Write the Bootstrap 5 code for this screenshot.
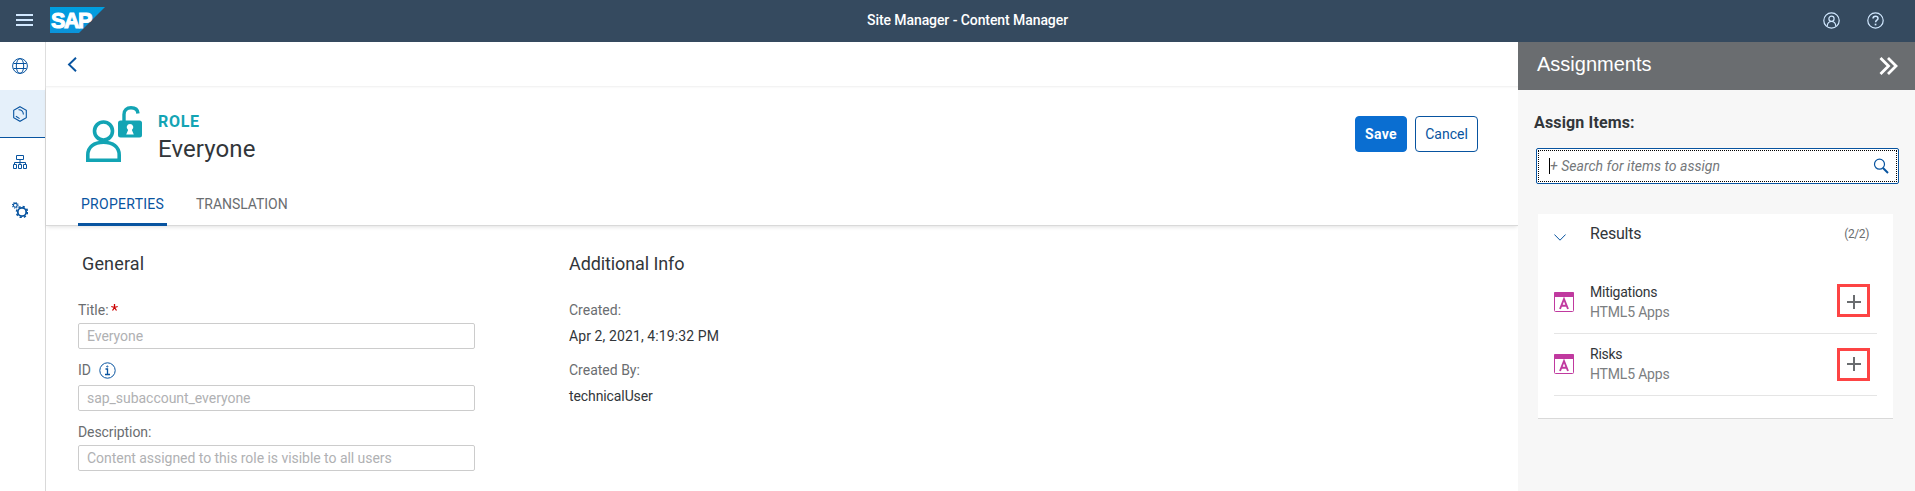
<!DOCTYPE html>
<html lang="en">
<head>
<meta charset="utf-8">
<meta name="viewport" content="width=device-width, initial-scale=1">
<title>Site Manager - Content Manager</title>
<link rel="stylesheet" href="https://cdn.jsdelivr.net/npm/bootstrap@5.3.0/dist/css/bootstrap.min.css">
<style>
body{font-family:Roboto,sans-serif;font-size:14px;line-height:20px;color:#32363a;height:491px;overflow:hidden;background:#fff}
svg{display:block;flex:none}
a{text-decoration:none}
.shell{height:42px;background:#354a5f;color:#fff;padding:0 31px 2px 16px}
.shell>div{flex:1 1 0}
.shell .shell-title{font-weight:500;letter-spacing:-.08px;flex:none;padding-left:35px}
.burger{color:#d1e8ff;margin-right:17px}
.logo-text{font:bold 22px "Liberation Sans",Arial,sans-serif;letter-spacing:-1.5px}
.shell-actions{gap:27px;color:#d1e8ff}
.side{width:46px;border-right:1px solid #d9d9d9;color:#0854a0;flex:none}
.side a{height:48px;width:45px;color:inherit;padding-left:12px}
.side a.active{background:#e5f0fa;border-bottom:1px solid #0854a0}
.work{height:449px}
.crumb{height:45px;padding-left:21px;border-bottom:1px solid #f4f4f4;box-shadow:0 1px 1px #fafafa;color:#0854a0}
.objhead{height:139px;border-bottom:1px solid #d9d9d9;box-shadow:0 2px 4px -1px rgba(0,0,0,.12)}
.objtop{height:92px;padding:19px 40px 0}
.names{padding:6px 0 0 16px}
.kind{color:#13a4b4;font-weight:700;font-size:16px;line-height:20px;letter-spacing:.7px}
.objname{font-size:24px;line-height:34px;letter-spacing:.1px}
.ui-btns{gap:8px;padding-top:10px}
.ui-btn{height:36px;border-radius:4px;font-size:14px;line-height:34px;padding:0;border:1px solid #0854a0;color:#0854a0}
.ui-btn.save{background:#0a6ed1;border-color:#0a6ed1;color:#fff;font-weight:700;width:52px;letter-spacing:.3px}
.ui-btn.cancel{width:63px}
.ui-tabs{height:47px;padding-left:32px;gap:29px}
.ui-tabs a{color:#6a6d70;padding:15px 0 0;letter-spacing:-.05px}
.ui-tabs a.active{color:#0854a0;width:89px;padding-left:3px;letter-spacing:.28px;border-bottom:3px solid #0854a0}
.details{padding:27px 32px 0}
.col-a{width:397px;margin-right:94px}
.sec{font-size:18px;line-height:22px;margin-bottom:25px;letter-spacing:-.1px}
.general{padding-left:4px;letter-spacing:.15px}
.lab{color:#6a6d70;height:20px}
.lab-title{margin-bottom:3px}
.lab-id{margin:11px 0 5px}
.lab-desc{margin:11px 0 3px;letter-spacing:-.08px}
.req{margin:4px 0 0 2px}
.val{margin:6px 0 14px;letter-spacing:.1px}
.val-user{margin-top:6px;letter-spacing:-.1px}
.field{height:26px;border:1px solid #ccc;border-radius:2px;padding:0 8px;font-size:14px;line-height:24px;background:#fff;min-height:0;letter-spacing:-.04px}
.field::placeholder{color:#b0b1b3;opacity:1}
.panel{width:397px;background:#f7f7f7;flex:none}
.panel-head{height:48px;background:#6a6d70;color:#fff;padding:0 17px 4px 19px;font:20px "Liberation Sans",Arial,sans-serif}
.assign{font-weight:700;font-size:16px;margin:23px 0 0 16px;letter-spacing:.15px}
.search{margin:15px 16px 0 18px;height:36px;border:1px solid #0854a0;border-radius:2px;background:#fff;padding:1px}
.search>div{height:32px;border:1px dotted #000;padding:0 7px 0 10px}
.caret{width:1px;height:16px;background:#000}
.hint{font-style:italic;color:#74777a;letter-spacing:.02px}
.result-card{margin:30px 0 0 20px;height:205px;background:#fff;border-bottom:1px solid #d9d9d9;padding:10px 16px 0;width:355px}
.res-head{height:48px}
.chev{margin-top:10px}
.res-name{font-size:16px;letter-spacing:-.2px;padding-left:24px}
.res-count{font-size:12px;color:#6a6d70;letter-spacing:-.4px;padding-right:8px}
.item-row{height:62px;border-bottom:1px solid #e5e5e5;padding-right:13px}
.ic{margin-top:20px}
.txt{padding:10px 0 0 16px;letter-spacing:-.25px}
.sub{color:#7b7e81;letter-spacing:-.18px}
.add{width:20px;margin-top:20px}
.ring{left:-7px;top:-8px;width:33px;height:33px;border:3px solid #fd4444}
.ring.low{top:-6px}
</style>
</head>
<body>
<header class="shell d-flex align-items-center">
 <div class="d-flex align-items-center">
  <svg class="burger" width="17" height="14" viewBox="0 0 17 14" stroke="currentColor" stroke-width="2"><path d="M0 2h17M0 7h17M0 12h17"/></svg>
  <svg width="55" height="26" viewBox="0 0 55 26"><defs><linearGradient id="sapBlue" x2="0" y2="1"><stop stop-color="#009fe0"/><stop offset="1" stop-color="#0b93da"/></linearGradient></defs><path d="M0 0h55L29 26H0z" fill="url(#sapBlue)"/><text class="logo-text" x="1" y="20.500" fill="#fff" stroke="#fff" stroke-width="1" textLength="40" lengthAdjust="spacingAndGlyphs">SAP</text></svg>
 </div>
 <div class="shell-title">Site Manager - Content Manager</div>
 <div class="shell-actions d-flex justify-content-end">
  <svg width="17" height="17" viewBox="0 0 17 17" fill="none" stroke="currentColor" stroke-width="1.200"><circle cx="8.500" cy="8.500" r="7.700"/><circle cx="8.500" cy="6.700" r="2.600"/><path d="M4.200 14c.3-3 1.900-4.500 4.300-4.500s4 1.500 4.300 4.500"/></svg>
  <svg width="17" height="17" viewBox="0 0 17 17" fill="none" stroke="currentColor" stroke-width="1.200"><circle cx="8.500" cy="8.500" r="7.700"/><path d="M6 6.600C6 5 7 4.200 8.500 4.200S11 5 11 6.400c0 1.800-2.400 1.800-2.400 3.900" stroke-width="1.500"/><path d="M7.700 12.500h1.700" stroke-width="1.700"/></svg>
 </div>
</header>
<div class="work d-flex">
 <nav class="side d-flex flex-column">
  <a href="#" class="d-flex align-items-center"><svg width="16" height="16" viewBox="0 0 16 16" fill="none" stroke="currentColor"><circle cx="8" cy="8" r="7.400"/><ellipse cx="8" cy="8" rx="3.700" ry="7.400"/><path d="M1.500 5.500h13M1.500 10.500h13"/></svg></a>
  <a href="#" class="active d-flex align-items-center"><svg width="16" height="16" viewBox="0 0 16 16" fill="none" stroke="currentColor" stroke-width="1.100"><path d="M8 .7l6.300 3.500v7.600L8 15.300 1.700 11.800V4.200z"/><path d="M6.500 3.800c2.800-.2 4.800 1.700 4.900 4.700"/><path d="M3.900 10.200l3.700 2.400"/></svg></a>
  <a href="#" class="d-flex align-items-center"><svg width="16" height="16" viewBox="0 0 16 16" fill="none" stroke="currentColor"><path d="M4.500 1.500h7v4h-7zM8 5.500v5M2.500 10.500v-2h11v2M1.500 10.500h3v4h-3zM6.500 10.500h3v4h-3zM11.500 10.500h3v4h-3z"/></svg></a>
  <a href="#" class="d-flex align-items-center"><svg width="16" height="16" viewBox="0 0 16 16" fill="none" stroke="currentColor"><circle cx="10" cy="10" r="4.200" stroke-width="1.800"/><circle cx="10" cy="10" r="5.500" stroke-width="1.600" stroke-dasharray="2.160"/><circle cx="3.300" cy="3.300" r="1.900" stroke-width="1.100"/><circle cx="3.300" cy="3.300" r="2.800" stroke-width="1.100" stroke-dasharray="1.100"/></svg></a>
 </nav>
 <main class="flex-fill">
  <div class="crumb d-flex align-items-center"><svg width="11" height="15" viewBox="0 0 11 15" fill="none" stroke="currentColor" stroke-width="1.900"><path d="M9 .8L2 7.500l7 6.700"/></svg></div>
  <section class="objhead">
   <div class="objtop d-flex">
    <svg width="56" height="57" viewBox="0 0 56 57" fill="none" stroke="#13a4b4"><circle cx="17.500" cy="25" r="9" stroke-width="3.600"/><path d="M1.800 54.200V49C1.800 41 8 36.300 17.500 36.300S33.200 41 33.200 49v5.200z" stroke-width="3.600"/><path d="M38 15V8.500C38 4 40.800 1.800 45 1.800c4 0 6.700 2 7 5.700" stroke-width="3.400"/><rect x="32" y="14.500" width="24" height="17" rx="2.500" fill="#13a4b4" stroke="none"/><path d="M44 18a3.300 3.300 0 0 1 1.900 6l1.900 4.500h-7.600l1.900-4.500A3.300 3.300 0 0 1 44 18z" fill="#fff" stroke="none"/></svg>
    <div class="names flex-fill"><div class="kind">ROLE</div><div class="objname">Everyone</div></div>
    <div class="ui-btns d-flex"><button class="btn ui-btn save">Save</button><button class="btn ui-btn cancel">Cancel</button></div>
   </div>
   <div class="ui-tabs d-flex"><a href="#" class="active">PROPERTIES</a><a href="#">TRANSLATION</a></div>
  </section>
  <section class="details d-flex">
   <div class="col-a">
    <div class="sec general">General</div>
    <div class="lab lab-title d-flex"><span>Title:</span><svg class="req" width="7" height="7" viewBox="0 0 7 7" stroke="#c00" stroke-width="1.300"><path d="M3.500 3.500V0M3.500 3.500L.3 2.500M3.500 3.500L6.700 2.500M3.500 3.500L1.500 6.500M3.500 3.500L5.500 6.500"/></svg></div>
    <input class="form-control field" placeholder="Everyone">
    <div class="lab lab-id d-flex align-items-center">ID<svg class="ms-2" width="17" height="17" viewBox="0 0 17 17" fill="none" stroke="#0854a0"><circle cx="8.500" cy="8.500" r="7.700"/><path d="M6.500 7h2v5M6 12.500h5" stroke-width="1.300"/><circle cx="8.300" cy="4.500" r=".6"/></svg></div>
    <input class="form-control field" placeholder="sap_subaccount_everyone">
    <div class="lab lab-desc">Description:</div>
    <input class="form-control field" placeholder="Content assigned to this role is visible to all users">
   </div>
   <div>
    <div class="sec">Additional Info</div>
    <div class="lab">Created:</div>
    <div class="val">Apr 2, 2021, 4:19:32 PM</div>
    <div class="lab">Created By:</div>
    <div class="val-user">technicalUser</div>
   </div>
  </section>
 </main>
 <aside class="panel">
  <div class="panel-head d-flex align-items-center justify-content-between"><span>Assignments</span><svg class="mt-1" width="19" height="18" viewBox="0 0 19 18" fill="none" stroke="#fff" stroke-width="2.800"><path d="M1.500 1l8 8-8 8M9 1l8 8-8 8"/></svg></div>
  <div class="assign">Assign Items:</div>
  <div class="search"><div class="d-flex align-items-center"><span class="caret"></span><span class="hint flex-fill">+ Search for items to assign</span><svg width="16" height="16" viewBox="0 0 16 16" fill="none" stroke="#0854a0"><circle cx="6.500" cy="6.200" r="5" stroke-width="1.200"/><path d="M10 10l5 5" stroke-width="2"/></svg></div></div>
  <div class="result-card">
   <div class="res-head d-flex">
    <svg class="chev" width="12" height="7" viewBox="0 0 12 7" fill="none" stroke="#0854a0"><path d="M.4.500L6 6.200 11.600.5"/></svg>
    <span class="res-name flex-fill">Results</span><span class="res-count">(2/2)</span>
   </div>
   <div class="item-row d-flex">
    <svg class="ic" width="20" height="20" viewBox="0 0 20 20"><rect x=".5" y=".5" width="19" height="19" rx="1" fill="#fff" stroke="#c0399f"/><path d="M0 1q0-1 1-1h18q1 0 1 1v4H0z" fill="#c0399f"/><path d="M6 17l4-10 4 10M7.300 13.800h5.400" fill="none" stroke="#c0399f" stroke-width="1.900"/></svg>
    <div class="txt flex-fill"><div>Mitigations</div><div class="sub">HTML5 Apps</div></div>
    <div class="add position-relative"><svg width="20" height="20" viewBox="0 0 20 20" stroke="#6a6d70" stroke-width="2"><path d="M3 10h14M10 3v14"/></svg><span class="ring position-absolute"></span></div>
   </div>
   <div class="item-row d-flex">
    <svg class="ic" width="20" height="20" viewBox="0 0 20 20"><rect x=".5" y=".5" width="19" height="19" rx="1" fill="#fff" stroke="#c0399f"/><path d="M0 1q0-1 1-1h18q1 0 1 1v4H0z" fill="#c0399f"/><path d="M6 17l4-10 4 10M7.300 13.800h5.400" fill="none" stroke="#c0399f" stroke-width="1.900"/></svg>
    <div class="txt flex-fill"><div>Risks</div><div class="sub">HTML5 Apps</div></div>
    <div class="add position-relative"><svg width="20" height="20" viewBox="0 0 20 20" stroke="#6a6d70" stroke-width="2"><path d="M3 10h14M10 3v14"/></svg><span class="ring low position-absolute"></span></div>
   </div>
  </div>
 </aside>
</div>
<script src="https://cdn.jsdelivr.net/npm/bootstrap@5.3.0/dist/js/bootstrap.bundle.min.js"></script>
</body>
</html>
